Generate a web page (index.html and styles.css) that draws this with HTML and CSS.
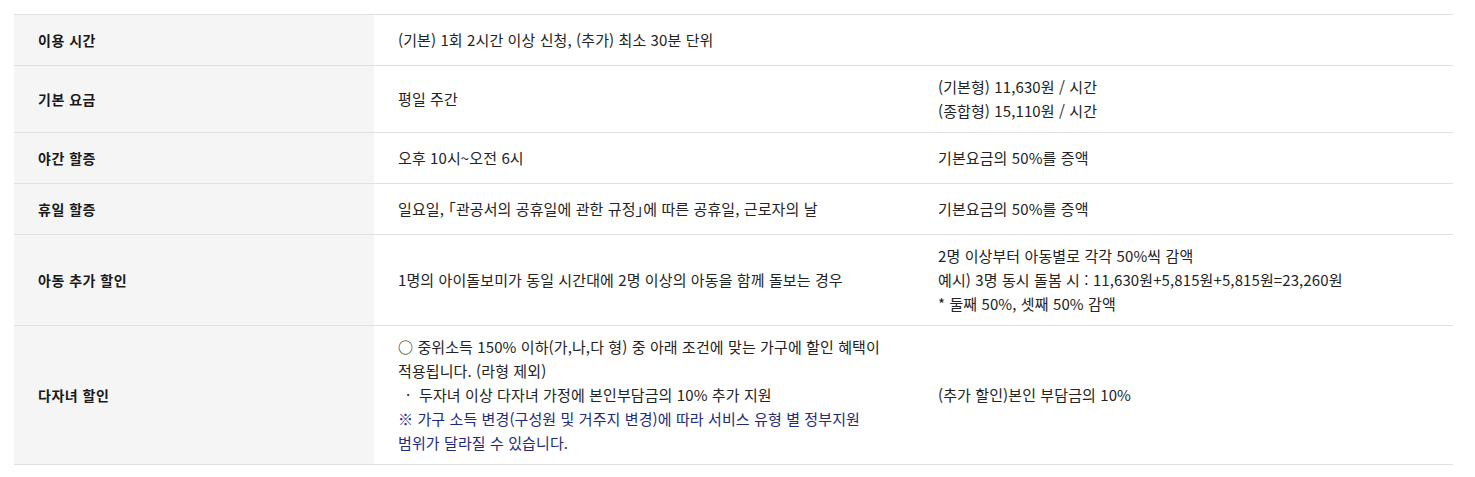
FILE: index.html
```html
<!DOCTYPE html>
<html lang="ko">
<head>
<meta charset="utf-8">
<link rel="stylesheet" href="styles.css">
</head>
<body>
<table class="fee-table">
  <colgroup>
    <col class="col-head">
    <col class="col-mid">
    <col class="col-right">
  </colgroup>
  <tbody>
    <tr>
      <th>이용 시간</th>
      <td colspan="2">(기본) 1회 2시간 이상 신청, (추가) 최소 30분 단위</td>
    </tr>
    <tr>
      <th>기본 요금</th>
      <td>평일 주간</td>
      <td>(기본형) 11,630원 / 시간<br>(종합형) 15,110원 / 시간</td>
    </tr>
    <tr>
      <th>야간 할증</th>
      <td>오후 10시~오전 6시</td>
      <td>기본요금의 50%를 증액</td>
    </tr>
    <tr>
      <th>휴일 할증</th>
      <td>일요일, ｢관공서의 공휴일에 관한 규정｣에 따른 공휴일, 근로자의 날</td>
      <td>기본요금의 50%를 증액</td>
    </tr>
    <tr>
      <th>아동 추가 할인</th>
      <td>1명의 아이돌보미가 동일 시간대에 2명 이상의 아동을 함께 돌보는 경우</td>
      <td>2명 이상부터 아동별로 각각 50%씩 감액<br>예시) 3명 동시 돌봄 시 : 11,630원+5,815원+5,815원=23,260원<br>* 둘째 50%, 셋째 50% 감액</td>
    </tr>
    <tr>
      <th>다자녀 할인</th>
      <td>○ 중위소득 150% 이하(가,나,다 형) 중 아래 조건에 맞는 가구에 할인 혜택이<br>적용됩니다. (라형 제외)<br><span class="bullet">·</span>두자녀 이상 다자녀 가정에 본인부담금의 10% 추가 지원<br><span class="note">※ 가구 소득 변경(구성원 및 거주지 변경)에 따라 서비스 유형 별 정부지원<br>범위가 달라질 수 있습니다.</span></td>
      <td>(추가 할인)본인 부담금의 10%</td>
    </tr>
  </tbody>
</table>
</body>
</html>
```
FILE: styles.css
```css
html, body {
  margin: 0;
  padding: 0;
  background: #ffffff;
}
body {
  padding: 14px 22px 0 14px;
  font-family: "Noto Sans CJK KR", "Noto Sans", sans-serif;
  font-size: 15px;
  color: #222222;
}
.fee-table {
  width: 1439px;
  border-collapse: collapse;
  table-layout: fixed;
  border-top: 1px solid #e1e1e1;
}
.col-head { width: 360px; }
.col-mid { width: 540px; }
.fee-table th,
.fee-table td {
  height: 32px;
  padding: 9px 24px;
  line-height: 24px;
  text-align: left;
  vertical-align: middle;
  border-bottom: 1px solid #e1e1e1;
}
.fee-table th {
  background: #f5f5f5;
  font-size: 14px;
  font-weight: 700;
  letter-spacing: 0.5px;
  color: #1a1a1a;
}
.fee-table td {
  color: #232323;
  font-weight: 400;
  letter-spacing: 0.1px;
}
.bullet {
  display: inline-block;
  padding-left: 8px;
  width: 21px;
  box-sizing: border-box;
}
.note {
  color: #1e2b7a;
}
```
